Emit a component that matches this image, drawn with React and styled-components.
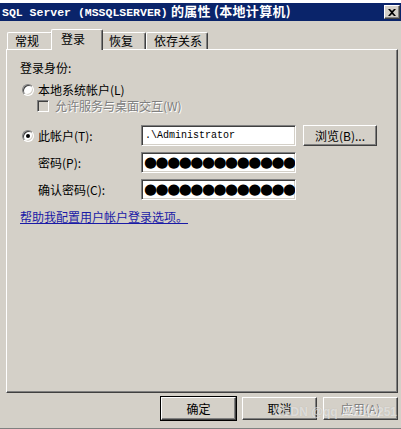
import React from "react";
import styled, { createGlobalStyle, css } from "styled-components";

const Global = createGlobalStyle`
  html, body { margin: 0; padding: 0; background: #d4d0c8; }
  body {
    font-family: "Noto Sans CJK SC", "Liberation Sans", sans-serif;
    font-size: 12px;
    color: #000;
  }
  * { box-sizing: border-box; }
`;

const Window = styled.div`
  position: relative;
  width: 401px;
  height: 429px;
  background: #d4d0c8;
  border-bottom: 1px solid #808080;
  display: flex;
  flex-direction: column;
  overflow: hidden;
`;

const TopStrip = styled.div`
  height: 3px;
  background: #fff;
`;

const TitleBar = styled.div`
  height: 18px;
  background: #0a246a;
  display: flex;
  align-items: center;
  justify-content: space-between;
  padding: 0 1px 0 2px;
`;

const Title = styled.div`
  color: #fff;
  font-weight: bold;
  font-size: 13px;
  line-height: 16px;
  white-space: nowrap;
  letter-spacing: 0.3px;
`;

const Mono = styled.span`
  font-family: "Liberation Mono", "DejaVu Sans Mono", monospace;
  font-size: 11.5px;
  font-weight: bold;
  letter-spacing: 0;
`;

const CloseBtn = styled.div`
  width: 16px;
  height: 14px;
  background: #d4d0c8;
  border-top: 1px solid #fff;
  border-left: 1px solid #fff;
  border-right: 1px solid #404040;
  border-bottom: 1px solid #404040;
  box-shadow: inset -1px -1px 0 #808080;
  display: flex;
  align-items: center;
  justify-content: center;
`;

const Body = styled.div`
  flex: 1;
  display: flex;
  flex-direction: column;
  padding: 0 3px 0 6px;
`;

const TabRow = styled.div`
  height: 28px;
  display: flex;
  align-items: flex-end;
  padding-left: 1px;
  position: relative;
  z-index: 1;
`;

const Tab = styled.div`
  width: ${(p) => p.$w}px;
  height: 17px;
  padding: 0 0 0 7px;
  display: flex;
  align-items: center;
  border-top: 1px solid #fff;
  border-left: 1px solid #fff;
  border-right: 1px solid #404040;
  box-shadow: inset -1px 0 0 #808080;
  border-radius: 2px 2px 0 0;
  background: #d4d0c8;
  line-height: 14px;
  white-space: nowrap;
  ${(p) =>
    p.$active &&
    css`
      width: ${p.$w + 4}px;
      height: 21px;
      margin: 0 -2px -1px -2px;
      padding: 0 0 3px 9px;
      z-index: 2;
    `}
`;

const Panel = styled.div`
  height: 344px;
  border-top: 1px solid #fff;
  border-left: 1px solid #fff;
  border-right: 1px solid #404040;
  border-bottom: 1px solid #404040;
  box-shadow: inset -1px -1px 0 #808080;
  padding: 10px 0 0 13px;
  display: flex;
  flex-direction: column;
`;

const Line = styled.div`
  height: 16px;
  line-height: 16px;
  display: flex;
  align-items: center;
  margin-top: ${(p) => p.$mt || 0}px;
  padding-left: ${(p) => p.$indent || 0}px;
  white-space: nowrap;
`;

const Radio = styled.span`
  width: 12px;
  height: 12px;
  border-radius: 50%;
  background: #fff;
  border: 1px solid;
  border-color: #808080 #fff #fff #808080;
  box-shadow: inset 1px 1px 0 #404040, inset -1px -1px 0 #d4d0c8;
  display: inline-flex;
  align-items: center;
  justify-content: center;
  margin: 0 4px 0 2px;
  flex: none;
  &::after {
    content: "";
    width: 4px;
    height: 4px;
    border-radius: 50%;
    background: ${(p) => (p.$checked ? "#000" : "transparent")};
  }
`;

const Check = styled.span`
  width: 12px;
  height: 12px;
  border: 1px solid;
  border-color: #808080 #fff #fff #808080;
  box-shadow: inset 1px 1px 0 #404040, inset -1px -1px 0 #d4d0c8;
  background: #d4d0c8;
  margin-right: 6px;
  flex: none;
`;

const Disabled = styled.span`
  color: #808080;
  text-shadow: 1px 1px 0 #fff;
`;

const AccountGrid = styled.div`
  margin-top: 11px;
  display: grid;
  grid-template-columns: 114px 155px 74px;
  column-gap: 7px;
  grid-auto-rows: 21px;
  row-gap: 6px;
  align-items: center;
`;

const Label = styled.div`
  display: flex;
  align-items: center;
  padding-left: ${(p) => (p.$indent ? 18 : 0)}px;
  white-space: nowrap;
  line-height: 16px;
`;

const Field = styled.div`
  height: 21px;
  background: #fff;
  border: 1px solid;
  border-color: #808080 #fff #fff #808080;
  box-shadow: inset 1px 1px 0 #404040, inset -1px -1px 0 #d4d0c8;
  padding: 0 2px 0 3px;
  display: flex;
  align-items: center;
  overflow: hidden;
  white-space: nowrap;
`;

const FieldText = styled.span`
  font-family: "Liberation Mono", "DejaVu Sans Mono", monospace;
  font-size: 10px;
`;

const Dots = styled.span`
  font-family: "DejaVu Sans", sans-serif;
  font-size: 15px;
  line-height: 15px;
  letter-spacing: -1.5px;
  margin-left: -1px;
`;

const Button = styled.div`
  width: ${(p) => p.$w || 75}px;
  height: ${(p) => p.$h || 23}px;
  background: #d4d0c8;
  display: flex;
  align-items: center;
  justify-content: center;
  white-space: nowrap;
  border: 1px solid;
  border-color: #fff #404040 #404040 #fff;
  box-shadow: inset -1px -1px 0 #808080;
  line-height: 14px;
  ${(p) =>
    p.$default &&
    css`
      box-shadow: 0 0 0 1px #000, inset -1px -1px 0 #808080;
    `}
  ${(p) =>
    p.$disabled &&
    css`
      color: #808080;
      text-shadow: 1px 1px 0 #fff;
    `}
`;

const LinkText = styled.a`
  color: #1a1aa6;
  text-decoration: underline;
  cursor: pointer;
`;

const ButtonRow = styled.div`
  margin-top: 4px;
  display: flex;
  justify-content: flex-end;
  gap: 6px;
`;

const Watermark = styled.div`
  position: absolute;
  right: 4px;
  bottom: 9px;
  font-family: "Liberation Sans", sans-serif;
  font-size: 12px;
  font-weight: bold;
  color: rgba(255, 255, 255, 0.55);
  text-shadow: 0 0 1px rgba(120, 120, 120, 0.35);
  white-space: nowrap;
  pointer-events: none;
`;

export default function App() {
  return (
    <>
      <Global />
      <Window>
        <TopStrip />
        <TitleBar>
          <Title>
            <Mono>SQL Server (MSSQLSERVER)</Mono> 的属性 (本地计算机)
          </Title>
          <CloseBtn>
            <svg width="8" height="7" viewBox="0 0 8 7">
              <path d="M0 0h2l2 2 2-2h2L5 3.5 8 7H6L4 5 2 7H0l3-3.5z" fill="#000" />
            </svg>
          </CloseBtn>
        </TitleBar>
        <Body>
          <TabRow>
            <Tab $w={46}>常规</Tab>
            <Tab $active $w={48}>登录</Tab>
            <Tab $w={45}>恢复</Tab>
            <Tab $w={62}>依存关系</Tab>
          </TabRow>
          <Panel>
            <Line>登录身份:</Line>
            <Line $mt={6}>
              <Radio />
              本地系统帐户(L)
            </Line>
            <Line $indent={17}>
              <Check />
              <Disabled>允许服务与桌面交互(W)</Disabled>
            </Line>
            <AccountGrid>
              <Label>
                <Radio $checked />
                此帐户(T):
              </Label>
              <Field>
                <FieldText>.\Administrator</FieldText>
              </Field>
              <Button $w={74} $h={21}>浏览(B)...</Button>
              <Label $indent>密码(P):</Label>
              <Field>
                <Dots>●●●●●●●●●●●●●●●</Dots>
              </Field>
              <span />
              <Label $indent>确认密码(C):</Label>
              <Field>
                <Dots>●●●●●●●●●●●●●●●</Dots>
              </Field>
              <span />
            </AccountGrid>
            <Line $mt={9}>
              <LinkText>帮助我配置用户帐户登录选项。</LinkText>
            </Line>
          </Panel>
          <ButtonRow>
            <Button $default>确定</Button>
            <Button>取消</Button>
            <Button $disabled>应用(A)</Button>
          </ButtonRow>
        </Body>
        <Watermark>CSDN @qq_41142251</Watermark>
      </Window>
    </>
  );
}
